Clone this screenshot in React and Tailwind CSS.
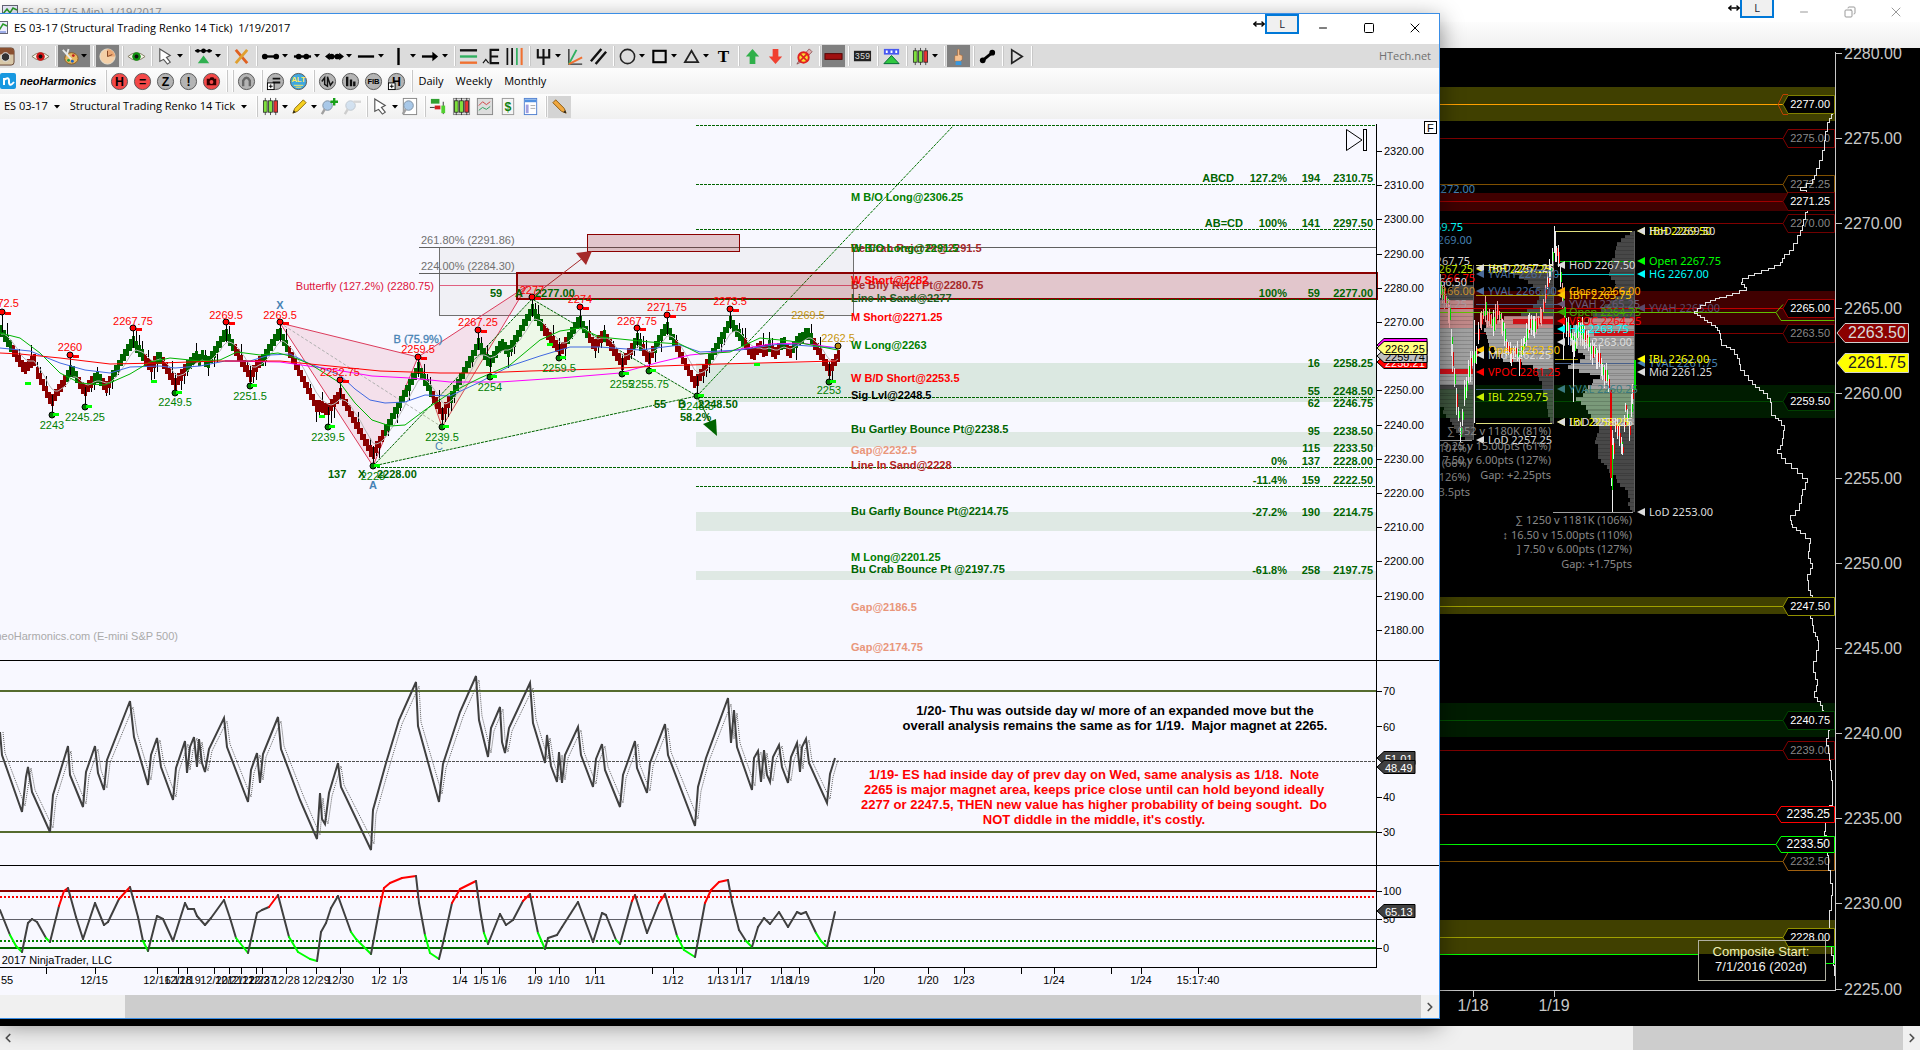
import { MoveHorizontal, Minus, Square, X, Copy, ChevronLeft, ChevronRight } from 'lucide-react'

const rnd = (i) => {
  const v = Math.sin(i * 12.9898) * 43758.5453
  return v - Math.floor(v)
}

const toPoints = (list) => list.map((p) => p.join(',')).join(' ')

/* ---------- front chart data ---------- */

const pivots = [
  [0, 325], [23, 375], [29, 357], [35, 365], [50, 408], [70, 363], [83, 397], [95, 370], [105, 393], [131, 335],
  [149, 373], [158, 350], [174, 390], [187, 358], [190, 368], [194, 350], [198, 366], [201, 350], [206, 370],
  [224, 327], [249, 382], [257, 357], [261, 366], [278, 326], [315, 412], [320, 400], [326, 416], [339, 388],
  [371, 461], [417, 362], [441, 420], [477, 338], [488, 369], [500, 338], [507, 357], [531, 304], [547, 342],
  [550, 333], [559, 357], [578, 314], [593, 352], [602, 328], [621, 370], [636, 333], [647, 366], [665, 320],
  [694, 390], [729, 316], [752, 362], [758, 340], [763, 358], [768, 340], [773, 361], [782, 335], [788, 360],
  [797, 333], [800, 345], [806, 326], [828, 376], [838, 348],
]

const bars = []
const fastLine = []
{
  let slow = 352
  let fast = 335
  for (let i = 1; i < pivots.length; i++) {
    const [x0, y0] = pivots[i - 1]
    const [x1, y1] = pivots[i]
    const down = y1 > y0
    const a = y0 + (down ? 6 : -6)
    const b = y1 + (down ? -6 : 6)
    for (let x = Math.ceil(x0 / 3) * 3; x < x1; x += 3) {
      const y = Math.round(a + ((b - a) * (x - x0)) / (x1 - x0))
      slow += (y - slow) * 0.13
      fast += (y - fast) * 0.3
      bars.push({ x, y, up: y < slow, wick: rnd(x) > 0.6 ? 9 + rnd(x + 7) * 9 : 0, down })
      fastLine.push([x + 1, Math.round(fast)])
    }
  }
}

const highs = [
  [2, 312, '2272.5', 307], [70, 355, '2260', 351], [133, 328, '2267.75', 325], [226, 322, '2269.5', 319],
  [280, 322, '2269.5', 319], [340, 380, '2252.75', 376], [418, 357, '2259.5', 353], [478, 330, '2267.25', 326],
  [532, 297, '2277', 294], [580, 307, '2274', 303], [637, 328, '2267.75', 325], [667, 315, '2271.75', 311],
  [730, 309, '2273.5', 305],
]

const lows = [
  [52, 415, '2243', 429], [85, 407, '2245.25', 421], [175, 393, '2249.5', 406], [250, 386, '2251.5', 400],
  [328, 427, '2239.5', 441], [373, 466, '2228', 480], [442, 427, '2239.5', 441], [490, 377, '2254', 391],
  [559, 358, '2259.5', 372], [622, 374, '2255', 388], [649, 371, '2255.75', 388], [697, 396, '2248.5', 410],
  [829, 382, '2253', 394],
]

const averages = [
  ['#ff00ff', '225,361 280,362 330,369 372,376 410,378 450,382 500,382 560,378 620,373 660,362 690,355 730,351 770,344 800,343 838,348'],
  ['#4169e1', '0,348 30,351 60,363 85,370 110,373 130,367 160,366 175,368 200,366 225,361 250,361 270,355 290,354 310,364 340,375 355,389 370,400 385,403 405,402 425,395 450,396 480,382 510,366 540,356 570,347 600,347 640,350 680,345 700,352 740,350 780,344 838,348'],
  ['#00b400', '0,333 20,338 40,353 60,373 80,383 105,385 130,374 150,362 170,358 200,361 220,360 237,352 260,355 278,353 290,356 310,364 340,383 355,403 372,420 390,426 405,425 425,410 450,393 480,378 510,365 540,340 560,331 580,328 600,337 650,342 680,344 700,354 730,352 760,338 790,341 838,350'],
  ['#ff0000', '0,353 20,354 60,358 110,364 160,363 220,361 280,361 340,367 380,371 440,373 480,373 530,371 600,369 660,366 720,364 760,363 836,361'],
]

const levels = [
  ['Be Crab Rejct Pt@2291.5', 252, '#a52a2a'], ['W B/O Long@2291.5', 252, '#008000'], ['M B/O Long@2306.25', 201, '#008000'],
  ['Be Bfly Rejct Pt@2280.75', 289, '#a52a2a'], ['W Short@2282', 284, '#ff0000'], ['Line In Sand@2277', 302, '#1f5c1f'],
  ['M Short@2271.25', 321, '#ff0000'], ['W Long@2263', 349, '#008000'], ['W B/D Short@2253.5', 382, '#ff0000'],
  ['Sig Lvl@2248.5', 399, '#000000'], ['Bu Gartley Bounce Pt@2238.5', 433, '#006400'], ['Gap@2232.5', 454, '#e9967a'],
  ['Line In Sand@2228', 469, '#b22222'], ['Bu Garfly Bounce Pt@2214.75', 515, '#006400'], ['M Long@2201.25', 561, '#008000'],
  ['Bu Crab Bounce Pt @2197.75', 573, '#006400'], ['Gap@2186.5', 611, '#e9967a'], ['Gap@2174.75', 651, '#e9967a'],
]

const targets = [
  ['ABCD', '127.2%', '194', '2310.75', 182], ['AB=CD', '100%', '141', '2297.50', 227], ['', '100%', '59', '2277.00', 297],
  ['', '', '16', '2258.25', 367], ['', '', '55', '2248.50', 395], ['', '', '62', '2246.75', 407],
  ['', '', '95', '2238.50', 435], ['', '', '115', '2233.50', 452], ['', '0%', '137', '2228.00', 465],
  ['', '-11.4%', '159', '2222.50', 484], ['', '-27.2%', '190', '2214.75', 516], ['', '-61.8%', '258', '2197.75', 574],
]

const rsi = [
  [0, 732], [2, 755], [22, 812], [26, 777], [28, 767], [32, 792], [50, 832], [53, 795], [68, 746], [70, 775], [83, 807],
  [86, 772], [95, 746], [98, 773], [104, 790], [107, 760], [130, 701], [134, 737], [148, 785], [151, 755], [157, 738],
  [161, 767], [173, 800], [176, 768], [185, 741], [187, 773], [190, 747], [194, 737], [197, 767], [199, 739], [202, 763],
  [205, 772], [209, 749], [224, 718], [227, 747], [248, 802], [251, 770], [257, 753], [260, 783], [263, 754], [278, 717],
  [281, 749], [300, 800], [317, 839], [320, 793], [322, 819], [325, 824], [329, 793], [338, 763], [341, 787], [371, 850],
  [373, 810], [386, 763], [399, 720], [416, 682], [418, 726], [439, 802], [443, 764], [460, 712], [476, 676], [479, 720],
  [488, 757], [491, 728], [500, 707], [502, 742], [505, 753], [509, 728], [530, 683], [533, 723], [545, 763], [547, 735],
  [551, 766], [557, 782], [559, 752], [562, 783], [565, 755], [578, 727], [581, 755], [593, 787], [596, 759], [602, 744],
  [605, 770], [620, 807], [623, 775], [635, 741], [637, 768], [647, 793], [650, 763], [665, 724], [668, 755], [695, 826],
  [698, 787], [706, 758], [728, 698], [731, 743], [734, 710], [737, 747], [752, 790], [754, 758], [758, 751], [761, 782],
  [764, 750], [767, 775], [770, 782], [773, 757], [779, 745], [782, 767], [788, 783], [791, 757], [797, 743], [800, 772],
  [802, 747], [806, 739], [809, 763], [827, 803], [830, 774], [835, 758],
]
const rsiSignal = rsi.map(([x, y], i) => [x + 3, Math.round(y * 0.9 + (i ? rsi[i - 1][1] : y) * 0.1)])

const cci = [
  [0, 910], [10, 935], [16, 946], [22, 952], [28, 923], [32, 919], [37, 922], [46, 938], [50, 942], [59, 906], [64, 891],
  [68, 888], [76, 917], [83, 939], [95, 903], [104, 925], [108, 922], [119, 899], [130, 887], [138, 917], [143, 941],
  [148, 951], [157, 916], [163, 919], [173, 941], [185, 903], [188, 909], [194, 909], [197, 916], [205, 925], [211, 918],
  [224, 900], [230, 918], [236, 938], [248, 953], [257, 913], [262, 910], [269, 907], [278, 895], [289, 937], [298, 952],
  [310, 959], [317, 961], [321, 932], [326, 923], [331, 908], [338, 896], [351, 932], [356, 939], [371, 954], [380, 906],
  [384, 888], [390, 883], [402, 878], [416, 876], [419, 903], [425, 935], [430, 953], [439, 959], [443, 943], [452, 903],
  [460, 889], [476, 881], [480, 910], [484, 933], [488, 944], [500, 914], [506, 925], [513, 920], [523, 901], [530, 894],
  [538, 933], [545, 949], [548, 938], [557, 935], [562, 927], [578, 902], [593, 942], [602, 913], [606, 915], [616, 940],
  [620, 944], [632, 901], [635, 895], [647, 933], [659, 903], [665, 894], [677, 936], [684, 950], [695, 957], [705, 903],
  [711, 890], [719, 882], [728, 880], [732, 902], [739, 930], [746, 941], [752, 947], [758, 927], [764, 918], [770, 924],
  [779, 912], [788, 927], [797, 912], [801, 914], [806, 912], [816, 933], [821, 941], [827, 947], [835, 912],
]

const cciColor = ([, y0], [, y1]) => {
  if (y1 < y0 && y1 <= 897 && y0 <= 907) return '#ff0000'
  if (y1 > y0 && y0 >= 932) return '#00ff00'
  return '#404040'
}

const timeTicks = [
  46, 95, 157, 178, 187, 214, 229, 241, 256, 262, 286, 316, 340, 379, 400, 460, 481, 499, 535, 559, 595, 652, 673, 718,
  736, 742, 781, 799, 874, 928, 964, 1021, 1054, 1111, 1141, 1198,
]
const timeLabels = [
  [7, '55'], [94, '12/15'], [157, '12/16'], [178, '12/18'], [187, '12/19'], [214, '12/20'], [229, '12/21'], [241, '12/22'],
  [256, '12/23'], [262, '12/27'], [286, '12/28'], [316, '12/29'], [340, '12/30'], [379, '1/2'], [400, '1/3'], [460, '1/4'],
  [481, '1/5'], [499, '1/6'], [535, '1/9'], [559, '1/10'], [595, '1/11'], [673, '1/12'], [718, '1/13'], [741, '1/17'],
  [781, '1/18'], [799, '1/19'], [874, '1/20'], [928, '1/20'], [964, '1/23'], [1054, '1/24'], [1141, '1/24'], [1198, '15:17:40'],
]

const priceY = (p) => Math.round(151 + (2320 - p) * 3.42)
const frontPrices = [2320, 2310, 2300, 2290, 2280, 2270, 2250, 2240, 2230, 2220, 2210, 2200, 2190, 2180]

function AxisTag({ y, h = 13, right = 1427, fill, color = '#000', children }) {
  return (
    <g>
      <polygon points={`1377,${y + h / 2} 1384,${y} ${right},${y} ${right},${y + h} 1384,${y + h}`} fill={fill} stroke="#000" />
      <text x="1385" y={y + h - 2} fill={color}>{children}</text>
    </g>
  )
}

function RenkoChart() {
  return (
    <svg viewBox="0 119 1439 876" className="block h-auto w-full bg-[#f8f8ff] font-['Liberation_Sans',sans-serif] text-[11px]" role="img" aria-label="ES 03-17 Renko chart">
      {/* support zones */}
      <g fill="#dfe9e4">
        <rect x="696" y="363" width="680" height="39" fill="#dbe8e1" />
        <rect x="696" y="432" width="680" height="15" />
        <rect x="696" y="512" width="680" height="19" />
        <rect x="696" y="571" width="680" height="9" />
      </g>

      {/* fib box */}
      <rect x="439.5" y="247.5" width="414" height="68" fill="#f0f0f5" stroke="#707070" />
      <path d="M419 247.5H1376M419 273.5H853" stroke="#606060" />
      <path d="M440 285.5H853" stroke="#e06080" />

      {/* harmonic patterns */}
      <g fill="#dc143c" fillOpacity="0.1" stroke="#dc3c5c">
        <polygon points="280,323 373,466 418,357" />
        <polygon points="418,357 442,427 527,286" />
      </g>
      <path d="M280 323L442 427" stroke="#b0b0b0" strokeDasharray="3 2" />
      <polygon points="373,466 532,299 697,396" fill="#90ff20" fillOpacity="0.1" stroke="#006400" strokeDasharray="3 1" />
      <path d="M697 396L954 125" stroke="#007000" strokeDasharray="3 1" fill="none" />

      {/* resistance zones */}
      <rect x="517" y="273" width="860" height="26" fill="#8b0000" fillOpacity="0.2" stroke="#8b0000" strokeWidth="2" />
      <rect x="587.5" y="234.5" width="152" height="17" fill="#8b0000" fillOpacity="0.2" stroke="#8b0000" />
      <path d="M532 297L588 254" stroke="#a52a2a" />
      <polygon points="576,253 592,251 586,265" fill="#a52a2a" />

      <g stroke="#006400" strokeDasharray="3 1" shapeRendering="crispEdges">
        <path d="M696 125.5H1376M696 184.5H1376M696 229.5H1376M532 299.5H1376M696 397.5H1376M373 467.5H1376M696 486.5H1376" />
      </g>

      {/* bricks */}
      <g shapeRendering="crispEdges">
        {bars.map((b, i) => (
          <g key={i}>
            {b.wick > 0 && <path d={`M${b.x + 1.5} ${b.y - (b.down ? b.wick : 4)}V${b.y + (b.down ? 6 : b.wick)}`} stroke="#000" />}
            <rect x={b.x} y={b.y - 6} width="3" height="12" fill={b.up ? '#006400' : '#8b0000'} />
          </g>
        ))}
        {highs.map(([x, y]) => <path key={x} d={`M${x + 0.5} ${y}v20`} stroke="#000" />)}
        {lows.map(([x, y]) => <path key={x} d={`M${x + 0.5} ${y - 20}v20`} stroke="#000" />)}
      </g>
      <polyline points={toPoints(fastLine)} fill="none" stroke="#b8b8b8" />
      {averages.map(([color, pts]) => <polyline key={color} points={pts} fill="none" stroke={color} />)}

      {/* swing markers */}
      {highs.map(([x, y, label, ty]) => (
        <g key={x} textAnchor="middle">
          <rect x={x + 3} y={y} width="6" height="3" fill="#ff0000" />
          <circle cx={x} cy={y} r="3" fill="#ff0000" stroke="#000" />
          <text x={x} y={ty} fill="#ff0000">{label}</text>
        </g>
      ))}
      {lows.map(([x, y, label, ty]) => (
        <g key={x} textAnchor="middle">
          <circle cx={x} cy={y} r="3" fill="#008000" stroke="#000" />
          <rect x={x + 1} y={y - 2} width="6" height="3" fill="#00ff00" />
          <text x={x} y={ty} fill="#008000">{label}</text>
        </g>
      ))}
      {[[25, 382], [151, 380], [319, 415], [547, 343], [754, 363]].map(([x, y]) => (
        <rect key={x} x={x} y={y} width="6" height="3" fill="#00ff00" />
      ))}
      <circle cx="838" cy="346" r="3" fill="#b8860b" stroke="#000" />
      <g fill="#c8960c" textAnchor="middle">
        <text x="808" y="319">2269.5</text>
        <text x="838" y="342">2262.5</text>
      </g>

      {/* pattern labels */}
      <g fill="#707070">
        <text x="421" y="244">261.80% (2291.86)</text>
        <text x="421" y="270">224.00% (2284.30)</text>
      </g>
      <text x="434" y="290" textAnchor="end" fill="#dc143c">Butterfly (127.2%) (2280.75)</text>
      <g fill="#4682b4" textAnchor="middle" className="text-[11px]">
        <text x="280" y="309" className="font-bold">X</text>
        <text x="418" y="343" stroke="#4682b4" strokeWidth="0.3">B (75.9%)</text>
        <text x="373" y="489" className="font-bold">A</text>
        <text x="439" y="450">C</text>
      </g>
      <g fill="#006400" className="font-bold">
        <text x="490" y="297">59</text>
        <text x="515" y="297">A</text>
        <text x="535" y="297">2277.00</text>
        <text x="328" y="478">137</text>
        <text x="358" y="478">X</text>
        <text x="377" y="478">2228.00</text>
        <text x="654" y="408">55</text>
        <text x="678" y="408">B</text>
        <text x="698" y="408">2248.50</text>
        <text x="680" y="421">58.2%</text>
      </g>
      <path d="M697 396L713 428" stroke="#006400" />
      <polygon points="703,424 716,419 717,436" fill="#006400" />

      <g className="font-bold">
        {levels.map(([label, y, color]) => <text key={label} x="851" y={y} fill={color}>{label}</text>)}
        {targets.map(([name, pct, count, price, y]) => (
          <g key={price} fill="#006400" textAnchor="end">
            {name && <text x={name === 'ABCD' ? 1234 : 1243} y={y}>{name}</text>}
            {pct && <text x="1287" y={y}>{pct}</text>}
            <text x="1320" y={y}>{count}</text>
            <text x="1373" y={y}>{price}</text>
          </g>
        ))}
      </g>

      {/* jump to last bar, fixed scale flag */}
      <g fill="none" stroke="#000">
        <polygon points="1346.5,129.5 1362,140 1346.5,150.5" />
        <rect x="1363.5" y="129.5" width="3" height="21" />
        <rect x="1424.5" y="121.5" width="12" height="12" fill="#fff" />
      </g>
      <text x="1427" y="132">F</text>
      <text x="178" y="640" textAnchor="end" fill="#aaaaaa">neoHarmonics.com (E-mini S&amp;P 500)</text>

      {/* oscillator panel */}
      <path d="M0 691H1376M0 832H1376" stroke="#556b2f" strokeWidth="2" />
      <path d="M0 761.5H1376" stroke="#505050" strokeDasharray="3 1" />
      <polyline points={toPoints(rsiSignal)} fill="none" stroke="#606060" strokeDasharray="1 1" />
      <polyline points={toPoints(rsi)} fill="none" stroke="#404040" strokeWidth="2" />
      <g textAnchor="middle" className="text-[13px] font-bold">
        <text x="1115" y="715">1/20- Thu was outside day w/ more of an expanded move but the</text>
        <text x="1115" y="730">overall analysis remains the same as for 1/19.{'\u00a0\u00a0'}Major magnet at 2265.</text>
        <g fill="#ff0000">
          <text x="1094" y="779">1/19- ES had inside day of prev day on Wed, same analysis as 1/18.{'\u00a0\u00a0'}Note</text>
          <text x="1094" y="794">2265 is major magnet area, keeps price close until can hold beyond ideally</text>
          <text x="1094" y="809">2277 or 2247.5, THEN new value has higher probability of being sought.{'\u00a0\u00a0'}Do</text>
          <text x="1094" y="824">NOT diddle in the middle, it's costly.</text>
        </g>
      </g>

      {/* lower panel */}
      <path d="M0 919.5H1376" stroke="#606068" />
      <path d="M0 891H1376" stroke="#8b0000" strokeWidth="2" />
      <path d="M0 897H1376" stroke="#ff0000" strokeWidth="2" strokeDasharray="2 2" />
      <path d="M0 941H1376" stroke="#008000" strokeWidth="2" strokeDasharray="2 2" />
      <path d="M0 948H1376" stroke="#006400" strokeWidth="2" />
      {cci.slice(1).map((p, i) => (
        <line key={i} x1={cci[i][0]} y1={cci[i][1]} x2={p[0]} y2={p[1]} stroke={cciColor(cci[i], p)} strokeWidth="2" strokeLinecap="round" />
      ))}
      <text x="112" y="964" textAnchor="end">© 2017 NinjaTrader, LLC</text>

      {/* frame and axes */}
      <g stroke="#000" fill="none" shapeRendering="crispEdges">
        <path d="M0 660.5H1439M0 865.5H1439M0 967.5H1377M1376.5 124V968" />
        {frontPrices.map((p) => <path key={p} d={`M1376 ${priceY(p) + 0.5}h6`} />)}
        {[691, 726, 797, 832, 891, 919, 948].map((y) => <path key={y} d={`M1376 ${y + 0.5}h6`} />)}
        {timeTicks.map((x) => <path key={x} d={`M${x + 0.5} 967v7`} />)}
      </g>
      {frontPrices.map((p) => <text key={p} x="1384" y={priceY(p) + 4}>{p.toFixed(2)}</text>)}
      {[[70, 695], [60, 731], [40, 801], [30, 836], [100, 895], [50, 923], [0, 952]].map(([v, y]) => (
        <text key={v} x="1383" y={y}>{v}</text>
      ))}
      {timeLabels.map(([x, label]) => <text key={x} x={x} y="984" textAnchor="middle">{label}</text>)}

      <AxisTag y={355.5} fill="#ff0000" color="#fff">2258.21</AxisTag>
      <AxisTag y={349.5} fill="#c0c0c0">2259.74</AxisTag>
      <AxisTag y={338.5} fill="#ff00ff">2263.10</AxisTag>
      <AxisTag y={341.5} fill="#ffff80">2262.25</AxisTag>
      <AxisTag y={751.5} right={1415} fill="#404040" color="#fff">51.01</AxisTag>
      <AxisTag y={760.5} right={1415} fill="#404040" color="#fff">48.49</AxisTag>
      <AxisTag y={904.5} right={1415} fill="#404040" color="#fff">65.13</AxisTag>
    </svg>
  )
}

/* ---------- back chart data ---------- */

const bands = [
  [87, 34, '#404000'], [193, 18, '#400000'], [291, 34, '#400000'], [385, 33, '#001c00'],
  [597, 17, '#404000'], [703, 34, '#001c00'], [920, 34, '#404000'],
]

const priceLines = [
  [104, '2277.00', '#ffa000', '#fff', '#808000'], [138, '2275.00', '#800000', '#888', '#800000'],
  [184, '2272.25', '#805000', '#888', '#805000'], [201, '2271.25', '#a00000', '#fff', '#700000'],
  [223, '2270.00', '#800000', '#888', '#700000'], [308, '2265.00', '#c00000', '#fff', '#a00000'],
  [333, '2263.50', '#800000', '#888', '#700000'], [401, '2259.50', '#004800', '#fff', '#004000'],
  [606, '2247.50', '#a0a000', '#fff', '#909000'], [720, '2240.75', '#005000', '#fff', '#004800'],
  [750, '2239.00', '#800000', '#888', '#800000'], [861, '2232.50', '#805000', '#888', '#a06010'],
  [937, '2228.00', '#a0a000', '#fff', '#909000'],
]
const dimLines = priceLines.filter((l) => l[3] !== '#fff')
const brightLines = priceLines.filter((l) => l[3] === '#fff')

const composite = [
  [1833, 114], [1829, 122], [1825, 140], [1822, 160], [1816, 175], [1812, 183], [1800, 190], [1812, 205], [1807, 212],
  [1803, 225], [1800, 235], [1793, 250], [1784, 258], [1780, 265], [1768, 270], [1754, 275], [1742, 280], [1741, 284],
  [1746, 290], [1732, 295], [1719, 298], [1710, 302], [1700, 308], [1694, 313], [1700, 317], [1707, 322], [1715, 327],
  [1719, 333], [1721, 345], [1730, 349], [1737, 358], [1740, 370], [1748, 380], [1755, 387], [1763, 393], [1770, 402],
  [1771, 415], [1778, 420], [1784, 430], [1782, 445], [1777, 453], [1785, 463], [1797, 473], [1807, 482], [1802, 495],
  [1799, 510], [1790, 520], [1792, 527], [1800, 533], [1810, 543], [1808, 558], [1812, 568], [1807, 580], [1808, 590],
  [1812, 600], [1810, 618], [1813, 632], [1817, 640], [1818, 650], [1813, 672], [1817, 685], [1814, 697], [1820, 705],
  [1823, 715], [1829, 730], [1826, 745], [1829, 760], [1831, 780], [1832, 805], [1825, 826], [1824, 835], [1827, 855],
  [1828, 870], [1832, 895], [1829, 925], [1829, 945], [1833, 965], [1834, 975], [1835, 989],
]
const compositePath = composite.reduce((d, [x, y], i) => {
  if (!i) return `M${x} ${y}`
  const [px, py] = composite[i - 1]
  const mid = Math.round((px + x) / 2)
  const half = Math.round((py + y) / 2)
  return `${d}H${mid}V${half}H${x}V${y}`
}, '')

// right edge, point of control, value area and [y, width] outline of each session
const sessions = [
  { right: 1473, poc: 371, va: [300, 385], shape: [[285, 20], [300, 36], [385, 36], [395, 34], [410, 30], [425, 20], [440, 4]] },
  { right: 1553, poc: 321, va: [314, 366], shape: [[265, 8], [271, 38], [280, 26], [290, 12], [300, 16], [312, 32], [320, 66], [335, 68], [350, 58], [358, 50], [365, 20], [385, 10], [405, 6], [424, 2]] },
  { right: 1634, poc: 333, va: [318, 424], shape: [[231, 4], [238, 12], [246, 20], [260, 22], [272, 24], [285, 18], [292, 14], [305, 30], [318, 46], [325, 60], [345, 62], [355, 48], [365, 66], [375, 36], [385, 44], [397, 56], [410, 46], [425, 36], [440, 38], [455, 36], [465, 28], [475, 18], [490, 8], [512, 1]] },
]

const sessionRows = sessions.flatMap(({ right, va, shape }) => {
  const rows = []
  for (let i = 1; i < shape.length; i++) {
    const [y0, w0] = shape[i - 1]
    const [y1, w1] = shape[i]
    for (let y = y0; y < y1; y += 4) {
      const w = Math.max(1, Math.round(w0 + ((w1 - w0) * (y - y0)) / (y1 - y0) + (rnd(y + right) - 0.5) * 4))
      const inside = y >= va[0] && y < va[1]
      let fill = inside ? '#a0a0a0' : '#484848'
      if (y > 385 && y < 418) fill = inside ? '#7a9a7a' : '#405840'
      if (inside && y < 325) fill = '#c08888'
      rows.push({ x: right - w, y, w, h: Math.min(4, y1 - y), fill })
    }
  }
  return rows
})

const tape = [
  [1440, 290], [1446, 300], [1449, 312], [1452, 360], [1456, 400], [1460, 432], [1464, 395], [1468, 372], [1472, 360],
  [1476, 350], [1481, 318], [1485, 308], [1489, 322], [1493, 325], [1497, 310], [1502, 325], [1506, 345],
  [1511, 358], [1515, 350], [1519, 362], [1524, 340], [1529, 325], [1534, 326], [1541, 315], [1545, 295], [1550, 270],
  [1554, 242], [1558, 260], [1562, 295], [1566, 325], [1570, 335], [1574, 345], [1578, 325], [1584, 335], [1590, 348],
  [1597, 355], [1602, 370], [1608, 382], [1610, 430], [1611, 470], [1615, 425], [1619, 440], [1622, 450], [1625, 408],
  [1629, 430], [1632, 395], [1634, 365],
]
const tapeBars = tape.slice(1).flatMap(([x, y], i) => {
  const [px, py] = tape[i]
  const out = []
  for (let t = px; t < x; t += 2) {
    const cy = py + ((y - py) * (t - px)) / (x - px)
    out.push({ x: t, y: Math.round(cy), a: 4 + rnd(t) * 12, b: 4 + rnd(t + 3) * 12, up: rnd(t + 5) > 0.5 })
  }
  return out
})

const marks = [
  [1637, 'IBH 2269.50', 231, '#ff0'], [1637, 'HoD 2269.50', 231, '#ddd'], [1637, 'Open 2267.75', 261, '#0f0'],
  [1637, 'HG 2267.00', 274, '#0ff'], [1637, 'YVAH 2265.00', 308, '#5a4a6a'], [1637, 'YVAL 2261.75', 363, '#4682b4'],
  [1637, 'IBL 2262.00', 359, '#ff0'], [1637, 'Mid 2261.25', 372, '#ddd'], [1637, 'LoD 2253.00', 512, '#ddd'],
  [1557, 'HoD 2267.50', 265, '#ddd'], [1557, 'Close 2266.00', 291, '#ffa500'], [1557, 'IBH 2265.75', 295, '#ffc800'],
  [1557, 'YVAH 2265.25', 304, '#6a5a78'], [1557, 'Open 2264.75', 312, '#40a000'], [1557, 'VPOC 2264.25', 321, '#f00'],
  [1557, 'HG 2263.75', 329, '#0ff'], [1557, 'Mid 2263.00', 342, '#ddd'], [1557, 'YVAL 2260.25', 389, '#3a7a80'],
  [1557, 'IBL 2258.25', 422, '#ff0'], [1557, 'LoD 2258.25', 422, '#ddd'],
  [1476, 'IBH 2267.25', 269, '#ff0'], [1476, 'HoD 2267.25', 268, '#ddd'], [1476, 'YVAH 2267.00', 274, '#4a6a9a'],
  [1476, 'YVAL 2266.00', 291, '#4a6a9a'], [1476, 'Open 2262.50', 350, '#ffc800'], [1476, 'Mid 2262.25', 355, '#ddd'],
  [1476, 'VPOC 2261.25', 372, '#f00'], [1476, 'IBL 2259.75', 397, '#c8f000'], [1476, 'LoD 2257.25', 440, '#ddd'],
]

const notes = [
  [1475, '2272.00', 189, '#4682b4'], [1463, '2269.75', 227, '#0ff'], [1472, '2269.00', 240, '#4682b4'],
  [1470, '2267.75', 261, '#ddd'], [1473, '2267.25', 269, '#c8f000'], [1475, '2266.75', 278, '#f00'],
  [1467, '2266.50', 282, '#ddd'], [1475, '2266.00', 291, '#c89030'], [1467, '2265.25', 304, '#aa9aa0'],
  [1632, '∑ 1250 v 1181K (106%)', 520, '#888'], [1632, '↕ 16.50 v 15.00pts (110%)', 535, '#888'],
  [1632, '] 7.50 v 6.00pts (127%)', 549, '#888'], [1632, 'Gap: +1.75pts', 564, '#888'],
  [1551, '∑ 952 v 1180K (81%)', 431, '#888'], [1551, '↕ 9.25 v 15.00pts (61%)', 446, '#888'],
  [1551, '] 7.50 v 6.00pts (127%)', 460, '#888'], [1551, 'Gap: +2.25pts', 475, '#888'],
  [1470, '(101%)', 448, '#888'], [1470, '(66%)', 463, '#888'], [1470, '(126%)', 477, '#888'], [1470, '+3.5pts', 492, '#888'],
]

function LevelTag({ y, x = 1783, h = 18, stroke, fill = '#000', children, color }) {
  return (
    <g>
      <polygon points={`${x},${y + 0.5} ${x + 5},${y - h / 2 + 0.5} 1834.5,${y - h / 2 + 0.5} 1834.5,${y + h / 2 + 0.5} ${x + 5},${y + h / 2 + 0.5}`} fill={fill} stroke={stroke} />
      <text x="1830" y={y + 4} textAnchor="end" fill={color}>{children}</text>
    </g>
  )
}

function ProfileChart() {
  return (
    <svg viewBox="0 48 1920 978" className="block h-auto w-full bg-black font-['Liberation_Sans',sans-serif] text-[11px]" role="img" aria-label="ES 03-17 volume profile chart">
      <g shapeRendering="crispEdges">
        {bands.map(([y, h, fill]) => <rect key={y} x="0" y={y} width="1835" height={h} fill={fill} />)}
        {priceLines.map(([y, , stroke]) => <path key={y} d={`M0 ${y + 0.5}H1783`} stroke={stroke} />)}
        <path d="M0 814.5H1776" stroke="#ff0000" />
        <path d="M0 844.5H1776" stroke="#00ff00" />
        <path d="M0 954.5H1698" stroke="#00ff00" />

        {/* session profiles */}
        {sessionRows.map((r, i) => <rect key={i} x={r.x} y={r.y} width={r.w} height={r.h} fill={r.fill} />)}
        {sessionRows.map((r, i) => <rect key={i} x={r.x} y={r.y} width={r.w} height="1" fill="#000" opacity="0.15" />)}
        {sessions.map((s) => <rect key={s.right} x={s.right - 40} y={s.poc - 2} width="40" height="5" fill="#d01018" />)}
        <path d="M1473.5 265V440M1553.5 255V424M1634.5 231V512" stroke="#606060" />
        <path d="M1555 231.5H1632M1476 265.5H1553M1476 423.5H1552" stroke="#e0e080" />
        <path d="M1553 512.5H1633M1439 440.5H1472" stroke="#a0a0a0" />
        <path d="M1555 274.5H1634" stroke="#00c8c8" />
        <path d="M1560 261.5H1634" stroke="#00c000" />
        <path d="M1476 295.5H1560M1555 359.5H1578" stroke="#b0a000" />
        <path d="M1476 304.5H1560M1555 363.5H1634M1476 389.5H1553" stroke="#48608a" />
        <path d="M1439 312.5H1776" stroke="#60c000" />
        <path d="M1439 308.5H1783" stroke="#c00000" />

        {/* price tape */}
        {tapeBars.map((b) => (
          <g key={b.x}>
            <path d={`M${b.x + 0.5} ${b.y - b.a}V${b.y + b.b}`} stroke={b.y < 325 && b.y > 290 ? '#f0a8a8' : '#eee'} />
            <path d={`M${b.x + 1.5} ${b.y - b.a / 2}V${b.y + b.b / 2}`} stroke={b.up ? '#00e000' : '#e00000'} />
          </g>
        ))}
        <path d="M1474.5 320V423M1555.5 231V262M1563.5 320V360M1573.5 340V402" stroke="#eee" />
        <path d="M1610.5 390V478" stroke="#e00000" strokeWidth="2" />
        <path d="M1612.5 430V512" stroke="#eee" />
        <path d="M1612.5 445V490" stroke="#00e000" />
        <path d="M1634.5 360V390" stroke="#00e000" strokeWidth="2" />
      </g>

      <g className="font-['Noto_Sans',sans-serif]">
        {marks.map(([x, label, y, color]) => (
          <g key={x + label} fill={color}>
            <polygon points={`${x},${y} ${x + 8},${y - 4} ${x + 8},${y + 4}`} />
            <text x={x + 12} y={y + 4}>{label}</text>
          </g>
        ))}
        {notes.map(([x, label, y, color]) => (
          <text key={label + y} x={x} y={y + 4} textAnchor="end" fill={color}>{label}</text>
        ))}
      </g>

      {/* price tags on the inner edge */}
      {dimLines.map(([y, label, , color, stroke]) => (
        <LevelTag key={label} y={y} stroke={stroke} color={color} fill="none">{label}</LevelTag>
      ))}
      <path d={compositePath} fill="none" stroke="#e0e0e0" shapeRendering="crispEdges" />
      <path d="M1788 94.5H1783L1778 104.5L1783 114.5H1788" fill="none" stroke="#c04000" />
      <path d="M1783 304.5L1776 312.5L1781 320.5H1834.5" fill="none" stroke="#60c000" />
      {brightLines.map(([y, label, , color, stroke]) => (
        <LevelTag key={label} y={y} stroke={stroke} color={color}>{label}</LevelTag>
      ))}
      <g className="text-xs">
        <LevelTag y={814} x={1776} h={16} stroke="#ff0000" color="#fff">2235.25</LevelTag>
        <LevelTag y={844} x={1776} h={16} stroke="#00ff00" color="#fff">2233.50</LevelTag>
      </g>
      <path d="M1825.5 946.5H1834.5V963.5H1825.5" fill="none" stroke="#00ff00" />
      <rect x="1698.5" y="940.5" width="127" height="40" fill="none" stroke="#b0b0a0" />
      <g textAnchor="middle" className="text-[13px]">
        <text x="1761" y="956" fill="#f0f0b8">Composite Start:</text>
        <text x="1761" y="971" fill="#eee">7/1/2016 (202d)</text>
      </g>

      {/* axes */}
      <g stroke="#c8c8c8" shapeRendering="crispEdges">
        <path d="M1835.5 52V991M0 990.5H1836M1473.5 990V997M1554.5 990V997" />
        {[53, 138, 223, 308, 393, 478, 563, 648, 733, 818, 903, 989].map((y) => <path key={y} d={`M1835 ${y + 0.5}h7`} />)}
      </g>
      <g fill="#c8c8c8" className="text-base">
        {[53, 138, 223, 308, 393, 478, 563, 648, 733, 818, 903, 989].map((y, i) => (
          <text key={y} x="1844" y={y + 6}>{(2280 - i * 5).toFixed(2)}</text>
        ))}
        <text x="1473" y="1011" textAnchor="middle">1/18</text>
        <text x="1554" y="1011" textAnchor="middle">1/19</text>
        <polygon points="1837,333 1845,323.5 1908.5,323.5 1908.5,342.5 1845,342.5" fill="#8b0000" stroke="#d0d0d0" />
        <text x="1848" y="338" fill="#d8d8d8">2263.50</text>
        <polygon points="1837,363 1845,353.5 1908.5,353.5 1908.5,372.5 1845,372.5" fill="#ffff00" stroke="#d0d0d0" />
        <text x="1848" y="368" fill="#222">2261.75</text>
      </g>
    </svg>
  )
}

/* ---------- toolbar icons ---------- */

const Eye = ({ color }) => (
  <>
    <path d="M1 10Q10 2 19 10Q10 18 1 10Z" fill="#f4f4e8" stroke="#807860" />
    <circle cx="10" cy="10" r="4.5" fill={color} />
    <circle cx="10" cy="10" r="2" fill="#111" />
  </>
)
const Cursor = <path d="M4 2L15 9L11 11L15 16L12 18L8 13L4 15Z" fill="#fff" stroke="#555" strokeWidth="1.2" />
const Candles = (
  <g stroke="#222" strokeWidth="0.8">
    <path d="M4.5 1V19M10 1V19M15.5 1V19" />
    <rect x="2.5" y="4" width="4" height="12" fill="#7ee03c" />
    <rect x="8" y="4" width="4" height="12" fill="#7ee03c" />
    <rect x="13.5" y="4" width="4" height="12" fill="#e83434" />
  </g>
)
const Pencil = (
  <>
    <path d="M3 17L5 12L14 3L17 6L8 15Z" fill="#f5d020" stroke="#8a6a10" />
    <path d="M3 17L4 14L6 16Z" fill="#222" />
  </>
)
const PencilBack = (
  <>
    <path d="M17 17L15 12L6 3L3 6L12 15Z" fill="#f0a840" stroke="#8a5a10" />
    <path d="M17 17L16 14L14 16Z" fill="#222" />
  </>
)
const Lens = ({ sign }) => (
  <>
    <circle cx="9" cy="9" r="5" fill="#a8c8e8" stroke="#8090a0" />
    <path d="M6 13L3 18" stroke="#a0a0a0" strokeWidth="2.5" />
    {sign === '+' && <path d="M16 1V9M12 5H20" stroke="#18a018" strokeWidth="2.5" />}
    {sign === '-' && <path d="M12 5H20" stroke="#b0b0b0" strokeWidth="2.5" />}
  </>
)
const Dumbbell = () => (
  <>
    <path d="M2 10H18" stroke="#000" strokeWidth="2.5" />
    <circle cx="4" cy="10" r="3" />
    <circle cx="16" cy="10" r="3" />
  </>
)

const tools = [
  { name: 'Snapshot', icon: <><rect x="1" y="1" width="18" height="18" rx="3" fill="#d8c8a8" stroke="#604030" /><path d="M1 5Q1 1 5 1H15Q19 1 19 5V8H1Z" fill="#8a5030" /><circle cx="10" cy="10.5" r="4.5" fill="#333" stroke="#eee" /></> },
  'sep', 'sep',
  { name: 'Hide', icon: <Eye color="#d01818" /> }, 'sep',
  { name: 'Palette', caret: true, on: true, icon: <><ellipse cx="12" cy="12" rx="7" ry="6" fill="#e8b860" stroke="#8a5a20" /><circle cx="14" cy="9" r="1.5" fill="#c02020" /><circle cx="13" cy="15" r="1.5" fill="#2060c0" /><circle cx="9" cy="14" r="1.5" fill="#20a040" /><path d="M3 3L12 13M9 2L7 9" stroke="#e8e8e8" strokeWidth="2" /></> }, 'sep',
  { name: 'Timer', on: true, icon: <><circle cx="10" cy="10" r="8" fill="#f4d0a8" stroke="#e8e0d0" /><path d="M10 10L10 2A8 8 0 0 1 18 10Z" fill="#e89860" opacity="0.7" /><path d="M10 10V4M10 10L15 8" stroke="#804020" /></> }, 'sep',
  { name: 'Show', icon: <Eye color="#109010" /> }, 'sep',
  { name: 'Select', caret: true, icon: Cursor }, 'sep',
  { name: 'Anchor', caret: true, icon: <><path d="M1 4H19" stroke="#000" strokeWidth="1.5" /><circle cx="4" cy="4" r="2" /><circle cx="10" cy="4" r="2.5" /><circle cx="16" cy="4" r="2" /><path d="M4 17L10 9L16 17Z" fill="#30b050" /></> }, 'sep',
  { name: 'Settings', icon: <><path d="M4 3L16 17" stroke="#e06020" strokeWidth="3" /><path d="M16 3L4 17" stroke="#e0a030" strokeWidth="3" /></> }, 'sep',
  { name: 'Segment', caret: true, icon: <Dumbbell /> },
  { name: 'Extended line', caret: true, icon: <><path d="M1 10H19" stroke="#000" strokeWidth="2.5" /><circle cx="6" cy="10" r="3" /><circle cx="14" cy="10" r="3" /></> },
  { name: 'Ray', caret: true, icon: <><path d="M0 10L5 6V14ZM20 10L15 6V14Z" /><path d="M2 10H18" stroke="#000" strokeWidth="2" /><circle cx="7" cy="10" r="3" /><circle cx="13" cy="10" r="3" /></> },
  { name: 'Horizontal line', caret: true, icon: <path d="M1 10H18" stroke="#000" strokeWidth="2.5" /> },
  { name: 'Vertical line', caret: true, icon: <path d="M10 1V19" stroke="#000" strokeWidth="2.5" /> },
  { name: 'Arrow line', caret: true, icon: <><path d="M1 10H14" stroke="#000" strokeWidth="2.5" /><path d="M12 5L18 10L12 15Z" /></> }, 'sep',
  { name: 'Fibonacci levels', icon: <><path d="M1 3.5H19" stroke="#111" strokeWidth="2.5" /><path d="M1 10H19" stroke="#30b060" strokeWidth="2.5" /><path d="M1 16.5H19" stroke="#f07030" strokeWidth="2.5" /></> },
  { name: 'Fibonacci extension', icon: <><path d="M1 17L4 13L7 17" fill="none" stroke="#111" strokeWidth="1.2" /><path d="M18 3H9V17H18M9 10H17" fill="none" stroke="#111" strokeWidth="2.2" /></> },
  { name: 'Fibonacci time', icon: <><path d="M2.5 1V19M7.5 1V19" stroke="#111" strokeWidth="1.8" /><path d="M12.5 1V19" stroke="#30b060" strokeWidth="1.8" /><path d="M17.5 1V19" stroke="#f07030" strokeWidth="2.2" /></> }, 'sep',
  { name: 'Pitchfork', caret: true, icon: <path d="M4 2V11H16V2M10 2V19" fill="none" stroke="#111" strokeWidth="2.2" /> },
  { name: 'Gann fan', icon: <><path d="M3 2V18H17" fill="none" stroke="#333" strokeWidth="1.5" /><path d="M3 18L11 3" stroke="#30b060" strokeWidth="2" /><path d="M3 18L17 11" stroke="#f07030" strokeWidth="2" /></> },
  { name: 'Channel', icon: <path d="M2 15L13 2M7 18L18 5" stroke="#111" strokeWidth="2.5" /> }, 'sep',
  { name: 'Ellipse', caret: true, icon: <circle cx="10" cy="10" r="7.5" fill="none" stroke="#222" strokeWidth="1.6" /> },
  { name: 'Rectangle', caret: true, icon: <rect x="3.5" y="4" width="13" height="12" fill="none" stroke="#000" strokeWidth="2.2" /> },
  { name: 'Triangle', caret: true, icon: <path d="M10 4L17 16H3Z" fill="none" stroke="#222" strokeWidth="1.8" /> },
  { name: 'Text', icon: <text x="10" y="16" textAnchor="middle" className="font-['Liberation_Serif',serif] text-[18px] font-bold">T</text> }, 'sep',
  { name: 'Arrow up', icon: <path d="M10 2L17 10H13V18H7V10H3Z" fill="#30b04a" /> },
  { name: 'Arrow down', icon: <path d="M10 18L17 10H13V2H7V10H3Z" fill="#f04030" /> }, 'sep',
  { name: 'Remove drawings', icon: <><path d="M2 18L5 13L15 2L18 5L8 15Z" fill="#e0b0b0" stroke="#804040" strokeWidth="0.8" /><circle cx="9" cy="11" r="5.5" fill="#f8d830" stroke="#e02020" strokeWidth="2" /><path d="M5 7L13 15M13 7L5 15" stroke="#e02020" strokeWidth="1.8" /></> }, 'sep',
  { name: 'Zone', on: true, icon: <rect x="1" y="7" width="18" height="6" fill="#a01010" stroke="#500" /> }, 'sep',
  { name: 'Bar counter', icon: <><rect x="1" y="4" width="18" height="11" fill="#222" /><text x="10" y="13" textAnchor="middle" fill="#ddd" className="font-['Liberation_Mono',monospace] text-[9px]">359</text></> }, 'sep',
  { name: 'Alert', icon: <><rect x="2" y="2" width="16" height="6" fill="#4858f0" /><path d="M4 5H6M9 5H11M14 5H16" stroke="#fff" strokeWidth="2.5" /><path d="M2 17.5L10 9L18 17.5Z" fill="#30c840" stroke="#063" /></> }, 'sep',
  { name: 'Bar style', caret: true, icon: Candles }, 'sep',
  { name: 'Pan', on: true, icon: <><path d="M6 15V10Q7 8 9 9V3Q10 1 11 3V8L14 9V13L12 15Z" fill="#f4c090" stroke="#a06030" strokeWidth="0.6" /><rect x="7" y="15" width="6" height="4" fill="#3898e0" /></> }, 'sep',
  { name: 'Trend', icon: <><path d="M5 14L15 6" stroke="#000" strokeWidth="3" /><circle cx="5" cy="14" r="3" /><circle cx="15" cy="6" r="3" /></> }, 'sep',
  { name: 'Play', icon: <path d="M5 3L16 10L5 17Z" fill="none" stroke="#222" strokeWidth="1.8" /> }, 'sep',
]

const Disc = ({ fill = '#b4b4b4' }) => <circle cx="10" cy="10" r="8.5" fill={fill} stroke="#555" />
const Badge = ({ fill, small, children }) => (
  <>
    <Disc fill={fill} />
    <text x="10" y={small ? 13 : 15} textAnchor="middle" className={small ? "font-['Liberation_Sans',sans-serif] text-[8px] font-bold" : "font-['Liberation_Sans',sans-serif] text-[13px] font-bold"}>{children}</text>
  </>
)
const PlusBox = () => (
  <>
    <rect x="1.5" y="11.5" width="7" height="7" fill="#fff" stroke="#000" />
    <path d="M5 13V17M3 15H7" stroke="#000" />
  </>
)
const harmonics = [
  { name: 'Harmonic pattern', icon: <Badge fill="#f44848">H</Badge> },
  { name: 'Equal legs', icon: <Badge fill="#f44848">=</Badge> },
  { name: 'Zigzag', icon: <Badge>Z</Badge> },
  { name: 'Warning', icon: <Badge>!</Badge> },
  { name: 'Camera', icon: <><Disc fill="#f44848" /><path d="M5 7H8L9 5.5H12L13 7H15V14H5Z" fill="#300" /><circle cx="10" cy="10.5" r="2" fill="#f44848" /></> },
  'sep', 'sep',
  { name: 'Magnet', icon: <><Disc /><path d="M6.5 15V9Q10 3 13.5 9V15" fill="none" stroke="#666" strokeWidth="2.5" /></> },
  'sep',
  { name: 'Add level', icon: <><Disc /><path d="M7 7H15M7 11H15" stroke="#111" strokeWidth="2" /><PlusBox /></> },
  { name: 'Alternate', icon: <><Disc fill="#40a8e0" /><text x="10" y="11" textAnchor="middle" fill="#ffe860" className="font-['Liberation_Sans',sans-serif] text-[8px] font-bold">ALT</text><path d="M5 14H15M7 16H13" stroke="#ffe860" /></> },
  'sep',
  { name: 'Swings', icon: <><Disc /><path d="M4 10L7 6V13L10 15V5L13 14L16 10" fill="none" stroke="#111" strokeWidth="1.5" /></> },
  { name: 'Volume', icon: <><Disc /><path d="M6.5 5V15M10.5 8V15M14 10V15" stroke="#111" strokeWidth="2.5" /></> },
  { name: 'Fib', icon: <Badge small>FIB</Badge> },
  { name: 'Add harmonic', icon: <><Badge>H</Badge><PlusBox /></> },
  'sep',
]

const chartTools = [
  { name: 'Chart style', caret: true, icon: Candles },
  { name: 'Draw', caret: true, icon: Pencil },
  { name: 'Zoom in', icon: <Lens sign="+" /> },
  { name: 'Zoom out', icon: <g opacity="0.45"><Lens sign="-" /></g> }, 'sep',
  { name: 'Pointer', caret: true, icon: Cursor },
  { name: 'Data box', icon: <><rect x="3.5" y="1.5" width="14" height="17" fill="#fff" stroke="#888" /><Lens /></> }, 'sep',
  { name: 'Chart trader', icon: <><path d="M2 2H11V7H2Z" fill="#30a030" /><path d="M6 9H12V13H6Z" fill="#d02020" /><path d="M1 11H6M15 5V18" stroke="#333" /><rect x="13" y="9" width="4" height="8" fill="#50d030" /></> },
  { name: 'Data series', icon: <><rect x="1.5" y="1.5" width="17" height="17" fill="#ddd" stroke="#888" />{Candles}</> },
  { name: 'Indicators', icon: <><rect x="2.5" y="1.5" width="16" height="17" fill="#ddd" stroke="#888" /><path d="M4 9L8 5L12 8L16 5" fill="none" stroke="#d04040" /><path d="M4 14L8 11L12 13L16 10" fill="none" stroke="#30a060" /></> },
  { name: 'Strategies', icon: <><rect x="4.5" y="1.5" width="12" height="17" fill="#f4f4f4" stroke="#999" /><text x="10.5" y="15" textAnchor="middle" fill="#108010" className="font-['Liberation_Sans',sans-serif] text-[13px] font-bold">$</text></> },
  { name: 'Properties', icon: <><rect x="3.5" y="1.5" width="13" height="17" fill="#fff" stroke="#5080d0" /><path d="M4 4H16" stroke="#5090e0" strokeWidth="3" /><rect x="5" y="8" width="3" height="9" fill="#a0a0e0" /><path d="M10 9H15M10 12H15" stroke="#aaa" /></> },
  'sep',
  { name: 'Mark up', on: true, icon: PencilBack },
]

const Caret = () => <svg viewBox="0 0 6 4" className="h-1 w-1.5" aria-hidden="true"><path d="M0 0H6L3 3.5Z" /></svg>

function Tools({ items, active = 'bg-[#808080]', caretWidth = 'w-[9px]' }) {
  return items.map((t, i) =>
    t === 'sep' ? (
      <span key={i} className="flex h-full w-1.5 shrink-0 justify-center py-0.5"><span className="w-px bg-white shadow-[1px_0_0_#c8c8c8]" /></span>
    ) : (
      <button key={t.name} type="button" aria-label={t.name} className={`flex h-[22px] shrink-0 items-center ${t.on ? active : ''}`}>
        <svg viewBox="0 0 20 20" className="mx-0.5 h-[19px] w-[19px]" aria-hidden="true">{t.icon}</svg>
        {t.caret && <span className={caretWidth}><Caret /></span>}
      </button>
    )
  )
}

function WindowControls({ faded }) {
  return (
    <div className={`flex items-start ${faded ? 'text-[#999]' : 'text-black'}`}>
      <MoveHorizontal className="mt-1 size-3 text-black" strokeWidth={3} aria-hidden="true" />
      <button type="button" className={`h-5 w-[34px] border-2 border-[#0078d7] bg-[#f0f0f0] text-[11px] leading-4 text-[#223] ${faded ? 'mr-5' : 'mr-3.5'}`}>L</button>
      <button type="button" aria-label="Minimize" className="w-[46px] pt-2"><Minus className="ml-1 size-3" strokeWidth={2} /></button>
      <button type="button" aria-label="Maximize" className="w-[46px] pt-2">
        {faded ? <Copy className="ml-1 size-3 -scale-x-100" strokeWidth={2} /> : <Square className="ml-1 size-3" strokeWidth={2} />}
      </button>
      <button type="button" aria-label="Close" className="w-8 pt-1.5"><X className="ml-0.5 size-4" strokeWidth={1.5} /></button>
    </div>
  )
}

const ChartGlyph = () => (
  <svg viewBox="0 0 16 14" className="h-3.5 w-4" aria-hidden="true">
    <rect x="0.5" y="0.5" width="15" height="12" fill="#eef" stroke="#667" />
    <path d="M1 9L5 4L8 8L11 3L15 5" fill="none" stroke="#2a9a2a" strokeWidth="1.5" />
    <path d="M2 11H14" stroke="#4a6ad0" />
  </svg>
)

function Dropdown({ label, value, className }) {
  return (
    <label className={`flex items-center gap-1.5 ${className}`}>
      <select aria-label={label} className="field-sizing-content appearance-none bg-transparent p-0 outline-none">
        <option>{value}</option>
      </select>
      <Caret />
    </label>
  )
}

function FrontWindow() {
  return (
    <section className="absolute top-[13px] left-0 w-3/4 overflow-hidden border-t border-r border-b border-[#3a8ee6] bg-white shadow-[0_6px_22px_rgba(0,0,0,0.45)]">
      <header className="flex h-[30px] items-start justify-between pr-0.5">
        <h1 className="flex items-center gap-1.5 pt-1.5 text-[11px] leading-4 whitespace-pre">
          <span className="-ml-2"><ChartGlyph /></span>ES 03-17 (Structural Trading Renko 14 Tick)  1/19/2017
        </h1>
        <WindowControls />
      </header>

      <div className="flex h-6 items-center bg-[#dcdcdc]">
        <span className="-ml-1.5 flex h-full items-center"><Tools items={tools} /></span>
        <a href="#htech" className="mr-2 ml-auto text-[11px] text-[#707070]">HTech.net</a>
      </div>

      <div className="flex h-[26px] items-center bg-linear-to-b from-[#fdfdfd] to-[#f0f0f0] text-[11px]">
        <svg viewBox="0 0 16 16" className="size-4" aria-hidden="true">
          <rect width="16" height="16" rx="2" fill="#1898e0" />
          <path d="M4 12V5M4 7Q9 3 9 8V10Q10 14 14 9" fill="none" stroke="#fff" strokeWidth="2" />
        </svg>
        <span className="mr-1.5 ml-1 font-['Liberation_Sans',sans-serif] font-bold italic">neoHarmonics</span>
        <Tools items={['sep', ...harmonics]} />
        <div className="ml-1 flex gap-3">
          <button type="button">Daily</button>
          <button type="button">Weekly</button>
          <button type="button">Monthly</button>
        </div>
      </div>

      <div className="flex h-[25px] items-center bg-linear-to-b from-[#fdfdfd] to-[#f0f0f0] text-[11px]">
        <Dropdown label="Instrument" value="ES 03-17" className="ml-1" />
        <Dropdown label="Period" value="Structural Trading Renko 14 Tick" className="mr-1.5 ml-2.5" />
        <Tools items={['sep', ...chartTools]} active="bg-[#d4d4d4]" caretWidth="w-1.5" />
      </div>

      <RenkoChart />

      <div className="flex h-[23px] bg-[#f0f0f0]">
        <div className="ml-[125px] flex-1 bg-[#cdcdcd]" />
        <button type="button" aria-label="Scroll right" className="flex w-[18px] items-center justify-center text-[#505050]">
          <ChevronRight className="size-3.5" strokeWidth={3} />
        </button>
      </div>
    </section>
  )
}

export default function App() {
  return (
    <main className="relative flex min-h-screen flex-col overflow-hidden bg-black font-['Open_Sans','Noto_Sans',sans-serif] text-black">
      <header className="flex h-[22px] items-start justify-between overflow-hidden bg-white pr-0.5">
        <h2 className="flex items-center gap-1 pt-1 pl-0.5 text-[11px] leading-4 whitespace-pre text-[#999]">
          <ChartGlyph />ES 03-17 (5 Min)  1/19/2017
        </h2>
        <div className="-mt-0.5"><WindowControls faded /></div>
      </header>
      <div className="h-[26px] bg-linear-to-b from-[#fdfdfd] to-[#f0f0f0]" />
      <ProfileChart />
      <footer className="flex h-6 shrink-0 bg-[#f0f0f0] text-[#505050]">
        <button type="button" aria-label="Scroll left" className="flex w-4 items-center justify-center"><ChevronLeft className="size-3.5" strokeWidth={3} /></button>
        <div className="flex flex-1 justify-end"><div className="w-1/7 bg-[#cdcdcd]" /></div>
        <button type="button" aria-label="Scroll right" className="flex w-[17px] items-center justify-center"><ChevronRight className="size-3.5" strokeWidth={3} /></button>
      </footer>
      <FrontWindow />
    </main>
  )
}
